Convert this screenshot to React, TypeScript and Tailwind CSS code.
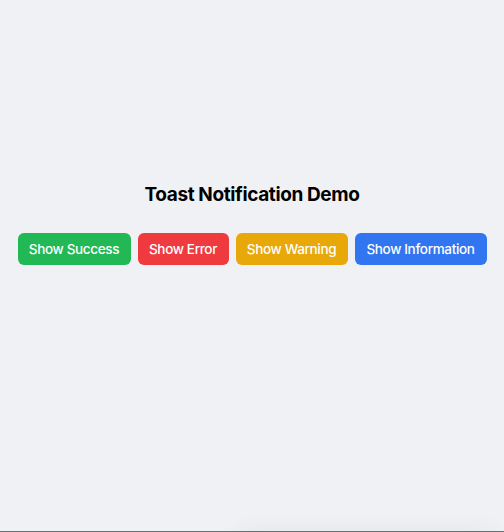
const buttons = [
  { label: "Show Success", cls: "bg-[#22b856] w-[113px]" },
  { label: "Show Error", cls: "bg-[#ef3a3f] w-[91px]" },
  { label: "Show Warning", cls: "bg-[#e8a80a] w-[112px]" },
  { label: "Show Information", cls: "bg-[#3175f0] w-[132px]" },
];

export default function App() {
  return (
    <div className="relative h-[532px] w-full overflow-hidden bg-[#f0f1f4] font-['Inter',sans-serif] border-b border-[#6b6e74]">
      <div className="flex flex-col items-center pt-[181px]">
        <h1 className="text-[19px] leading-7 font-bold text-black tracking-[-0.02em]">
          Toast Notification Demo
        </h1>
        <div className="mt-[24px] flex gap-[7px]">
          {buttons.map((b) => (
            <button
              key={b.label}
              className={`${b.cls} flex h-8 shrink-0 items-center justify-center whitespace-nowrap rounded-md text-[13.5px] font-medium tracking-[-0.025em] text-white`}
            >
              {b.label}
            </button>
          ))}
        </div>
      </div>
      <div className="pointer-events-none absolute -bottom-8 right-2 h-8 w-[260px] rounded-lg shadow-[0_-4px_20px_rgba(0,0,0,0.04)]" />
    </div>
  );
}
